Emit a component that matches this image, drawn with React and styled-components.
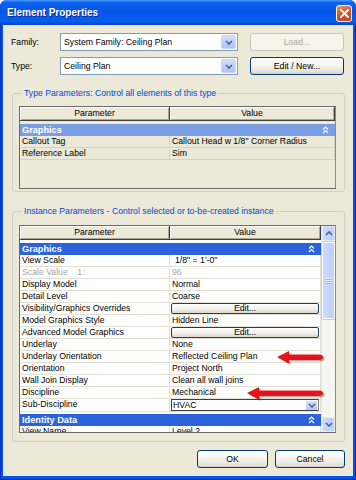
import React from 'react';
import styled, { createGlobalStyle } from 'styled-components';

const GlobalStyle = createGlobalStyle`
  html, body {
    margin: 0;
    padding: 0;
    background: #ffffff;
  }
  body {
    font-family: "Liberation Sans", Arial, sans-serif;
    font-size: 8.7px;
    color: #000;
  }
  * {
    box-sizing: border-box;
  }
`;

// dialog frame
const Window = styled.div`
  position: relative;
  width: 356px;
  height: 480px;
  display: flex;
  flex-direction: column;
  padding: 0 3px 4px;
  background: #0553e4;
  box-shadow: inset 1px 0 0 #0a2fc4, inset -1px 0 0 #00209c, inset 0 -1px 0 #00209c;
  border-radius: 7px 7px 0 0;
  overflow: hidden;
`;

const TitleBar = styled.div`
  height: 25px;
  margin: 0 -3px;
  display: flex;
  align-items: center;
  justify-content: space-between;
  padding: 0 4px 0 7px;
  background: linear-gradient(
    180deg,
    #4c9cfb 0%,
    #0d62ee 10%,
    #0657e8 45%,
    #0a5deb 85%,
    #0446cf 100%
  );
`;

const Title = styled.div`
  color: #fff;
  font-weight: bold;
  font-size: 10px;
  text-shadow: 1px 1px 0 #0b2a8c;
`;

const CloseButton = styled.div`
  width: 16px;
  height: 17px;
  border: 1px solid #fff;
  border-radius: 3px;
  background: linear-gradient(160deg, #ee9a7a 0%, #dc5f37 35%, #c63f17 100%);
  display: flex;
  align-items: center;
  justify-content: center;
  margin-top: 1px;
`;

const Body = styled.div`
  flex: 1;
  display: flex;
  flex-direction: column;
  background: #ece9d8;
  padding: 8px 8px 0 8px;
`;

const FieldRow = styled.div`
  display: flex;
  align-items: center;
  height: 18px;
  & + & {
    margin-top: 6px;
  }
`;

const FieldLabel = styled.div`
  width: 49px;
`;

const Combo = styled.div`
  width: ${(p) => p.width}px;
  height: 18px;
  display: flex;
  align-items: center;
  justify-content: space-between;
  background: #fff;
  border: 1px solid #7f9db9;
  padding: 1px 1px 1px 3px;
`;

const DropButton = styled.div`
  width: 15px;
  height: 100%;
  border-radius: 2px;
  border: 1px solid #cbd9f9;
  background: linear-gradient(180deg, #d2defc 0%, #b9cdf8 60%, #acc2f4 100%);
  display: flex;
  align-items: center;
  justify-content: center;
`;

const XpButton = styled.div`
  width: ${(p) => p.width}px;
  height: 18px;
  margin-left: ${(p) => p.gap || 0}px;
  display: flex;
  align-items: center;
  justify-content: center;
  border-radius: 3px;
  border: 1px solid ${(p) => (p.disabled ? '#c9c7ba' : '#003c74')};
  color: ${(p) => (p.disabled ? '#aca899' : '#000')};
  background: ${(p) =>
    p.disabled
      ? '#f5f4ea'
      : 'linear-gradient(180deg, #ffffff 0%, #f6f5f0 45%, #e6e3d8 85%, #d6d0c5 100%)'};
`;

const Group = styled.fieldset`
  margin: ${(p) => p.top}px 0 0 1px;
  padding: 0 8px ${(p) => p.bottom}px 6px;
  border: 1px solid #d0d0bf;
  border-radius: 3px;
  min-width: 0;
`;

const Legend = styled.legend`
  margin-left: 3px;
  padding: 0 2px;
  color: #0046d5;
  line-height: 12px;
  font-size: 8.7px;
`;

const Grid = styled.div`
  margin-top: ${(p) => p.top}px;
  height: ${(p) => p.height}px;
  display: flex;
  border: 1px solid #6a6a6a;
  border-right-color: #8a8a8a;
  background: ${(p) => p.bg};
  overflow: hidden;
`;

const Table = styled.div`
  flex: 1;
  min-width: 0;
  display: flex;
  flex-direction: column;
  overflow: hidden;
`;

const HeaderRow = styled.div`
  display: grid;
  grid-template-columns: 150px 1fr;
  height: 14px;
  flex-shrink: 0;
`;

const HeaderCell = styled.div`
  background: #ece9d8;
  border-right: 1px solid #404040;
  border-bottom: 1px solid #404040;
  box-shadow: inset 1px 1px 0 #fff, inset -1px -1px 0 #aca899;
  text-align: center;
  line-height: 13px;
`;

const Category = styled.div`
  flex-shrink: 0;
  margin-top: 3px;
  height: 12px;
  display: flex;
  align-items: center;
  justify-content: space-between;
  padding: 0 6px 0 2px;
  background: ${(p) => p.bg};
  color: #fff;
  font-weight: bold;
  font-size: 9.2px;
`;

const Row = styled.div`
  flex-shrink: 0;
  display: grid;
  grid-template-columns: 150px 1fr;
  height: 12px;
`;

const Cell = styled.div`
  border-right: 1px solid ${(p) => p.line};
  border-bottom: 1px solid ${(p) => p.line};
  padding-left: ${(p) => p.pad || 2}px;
  line-height: 11px;
  white-space: pre;
  overflow: hidden;
  color: ${(p) => (p.muted ? '#a7a6a0' : '#000')};
`;

const ValueSlot = styled.div`
  border-right: 1px solid ${(p) => p.line};
  border-bottom: 1px solid ${(p) => p.line};
  padding: 0 1px 0 1px;
  display: flex;
`;

const EditButton = styled.div`
  flex: 1;
  display: flex;
  align-items: center;
  justify-content: center;
  border: 1px solid #1f3c74;
  border-radius: 2px;
  background: linear-gradient(180deg, #ffffff 0%, #f1f0eb 55%, #dcd8cc 100%);
  line-height: 9px;
`;

const CellCombo = styled.div`
  flex: 1;
  display: flex;
  align-items: center;
  justify-content: space-between;
  border: 1px solid #404040;
  border-right-color: #808080;
  background: #fff;
  padding: 0 1px 0 1px;
  line-height: 10px;
`;

const MiniDrop = styled.div`
  width: 11px;
  height: 9px;
  border-radius: 1px;
  background: linear-gradient(180deg, #d2defc, #b3c8f6);
  display: flex;
  align-items: center;
  justify-content: center;
`;

const Scrollbar = styled.div`
  width: 14px;
  flex-shrink: 0;
  display: flex;
  flex-direction: column;
  background: #f7f7f2;
  border-left: 1px solid #e8e6dc;
`;

const ScrollButton = styled.div`
  height: 15px;
  flex-shrink: 0;
  border: 1px solid #e3ebfd;
  border-radius: 2px;
  background: linear-gradient(90deg, #c9d8fd 0%, #bccefa 100%);
  display: flex;
  align-items: center;
  justify-content: center;
`;

const Thumb = styled.div`
  height: 77px;
  margin-top: 1px;
  border: 1px solid #fff;
  box-shadow: 0 0 0 1px #b9cbf5;
  border-radius: 2px;
  background: linear-gradient(90deg, #cbd9fd 0%, #bdd0fa 100%);
  display: flex;
  flex-direction: column;
  align-items: center;
  justify-content: center;
  gap: 1px;
`;

const Grip = styled.div`
  width: 6px;
  height: 1px;
  background: #e6edfe;
  box-shadow: 0 1px 0 #9fb5e8;
`;

const Track = styled.div`
  flex: 1;
`;

const ButtonBar = styled.div`
  display: flex;
  justify-content: flex-end;
  margin-top: 8px;
`;

const ArrowSvg = styled.svg`
  position: absolute;
  left: ${(p) => p.left}px;
  top: ${(p) => p.top}px;
`;

const Chevron = ({ color = '#4d6185' }) => (
  <svg width="8" height="5" viewBox="0 0 8 5">
    <polyline points="1,1 4,4 7,1" fill="none" stroke={color} strokeWidth="1.6" />
  </svg>
);

const ChevronUp = ({ color = '#4d6185' }) => (
  <svg width="8" height="5" viewBox="0 0 8 5">
    <polyline points="1,4 4,1 7,4" fill="none" stroke={color} strokeWidth="1.6" />
  </svg>
);

const Collapse = () => (
  <svg width="7" height="8" viewBox="0 0 7 8">
    <polyline points="1,3.5 3.5,1 6,3.5" fill="none" stroke="#fff" strokeWidth="1.2" />
    <polyline points="1,7 3.5,4.5 6,7" fill="none" stroke="#fff" strokeWidth="1.2" />
  </svg>
);

const CloseIcon = () => (
  <svg width="9" height="9" viewBox="0 0 9 9">
    <path d="M1 1 L8 8 M8 1 L1 8" stroke="#fff" strokeWidth="1.8" strokeLinecap="square" />
  </svg>
);

// red callout arrow pointing left
const Arrow = ({ left, top, width }) => {
  const w = width;
  const shape = `M1 7 L13 1 L13 4.5 L${w - 7} 4.5 Q${w - 3} 4.5 ${w - 3} 7.25 Q${w - 3} 10 ${
    w - 7
  } 10 L13 10 L13 13.5 Z`;
  return (
    <ArrowSvg left={left} top={top} width={w} height="16" viewBox={`0 0 ${w} 16`}>
      <path d={shape} fill="rgba(60,20,20,0.35)" transform="translate(1.5 1.5)" />
      <path d={shape} fill="#e5141b" />
    </ArrowSvg>
  );
};

const typeRows = [
  ['Callout Tag', 'Callout Head w 1/8" Corner Radius'],
  ['Reference Label', 'Sim'],
];

const instanceRows = [
  { name: 'View Scale', value: '1/8" = 1\'-0"', pad: 5 },
  { name: 'Scale Value    1:', value: '96', muted: true },
  { name: 'Display Model', value: 'Normal' },
  { name: 'Detail Level', value: 'Coarse' },
  { name: 'Visibility/Graphics Overrides', kind: 'button', value: 'Edit...' },
  { name: 'Model Graphics Style', value: 'Hidden Line' },
  { name: 'Advanced Model Graphics', kind: 'button', value: 'Edit...' },
  { name: 'Underlay', value: 'None' },
  { name: 'Underlay Orientation', value: 'Reflected Ceiling Plan' },
  { name: 'Orientation', value: 'Project North' },
  { name: 'Wall Join Display', value: 'Clean all wall joins' },
  { name: 'Discipline', value: 'Mechanical' },
  { name: 'Sub-Discipline', kind: 'combo', value: 'HVAC' },
];

const WHITE_LINE = '#e2dfd4';
const BEIGE_LINE = '#d6d2c2';

const ParamRow = ({ row, line }) => (
  <Row>
    <Cell line={line} muted={row.muted}>
      {row.name}
    </Cell>
    {row.kind === 'button' && (
      <ValueSlot line={line}>
        <EditButton>{row.value}</EditButton>
      </ValueSlot>
    )}
    {row.kind === 'combo' && (
      <ValueSlot line={line}>
        <CellCombo>
          {row.value}
          <MiniDrop>
            <Chevron />
          </MiniDrop>
        </CellCombo>
      </ValueSlot>
    )}
    {!row.kind && (
      <Cell line={line} muted={row.muted} pad={row.pad}>
        {row.value}
      </Cell>
    )}
  </Row>
);

const Header = () => (
  <HeaderRow>
    <HeaderCell>Parameter</HeaderCell>
    <HeaderCell>Value</HeaderCell>
  </HeaderRow>
);

const App = () => {
  return (
    <>
      <GlobalStyle />
      <Window>
        <TitleBar>
          <Title>Element Properties</Title>
          <CloseButton>
            <CloseIcon />
          </CloseButton>
        </TitleBar>
        <Body>
          <FieldRow>
            <FieldLabel>Family:</FieldLabel>
            <Combo width={178}>
              System Family: Ceiling Plan
              <DropButton>
                <Chevron />
              </DropButton>
            </Combo>
            <XpButton width={94} gap={12} disabled>
              Load...
            </XpButton>
          </FieldRow>
          <FieldRow>
            <FieldLabel>Type:</FieldLabel>
            <Combo width={178}>
              Ceiling Plan
              <DropButton>
                <Chevron />
              </DropButton>
            </Combo>
            <XpButton width={94} gap={12}>
              Edit / New...
            </XpButton>
          </FieldRow>

          <Group top={12} bottom={2}>
            <Legend>Type Parameters: Control all elements of this type</Legend>
            <Grid top={7} height={83} bg="#ece9d8">
              <Table>
                <Header />
                <Category bg="#7b9de2">
                  Graphics
                  <Collapse />
                </Category>
                {typeRows.map(([name, value]) => (
                  <ParamRow key={name} row={{ name, value }} line={BEIGE_LINE} />
                ))}
              </Table>
            </Grid>
          </Group>

          <Group top={13} bottom={8}>
            <Legend>Instance Parameters - Control selected or to-be-created instance</Legend>
            <Grid top={8} height={208} bg="#ffffff">
              <Table>
                <Header />
                <Category bg="#2c62da">
                  Graphics
                  <Collapse />
                </Category>
                {instanceRows.map((row) => (
                  <ParamRow key={row.name} row={row} line={WHITE_LINE} />
                ))}
                <Category bg="#2c62da">
                  Identity Data
                  <Collapse />
                </Category>
                <ParamRow row={{ name: 'View Name', value: 'Level 2' }} line={WHITE_LINE} />
              </Table>
              <Scrollbar>
                <ScrollButton>
                  <ChevronUp />
                </ScrollButton>
                <Thumb>
                  <Grip />
                  <Grip />
                  <Grip />
                </Thumb>
                <Track />
                <ScrollButton>
                  <Chevron />
                </ScrollButton>
              </Scrollbar>
            </Grid>
          </Group>

          <ButtonBar>
            <XpButton width={71}>OK</XpButton>
            <XpButton width={70} gap={7}>
              Cancel
            </XpButton>
          </ButtonBar>
        </Body>
        <Arrow left={276} top={350} width={50} />
        <Arrow left={246} top={386} width={80} />
      </Window>
    </>
  );
};

export default App;
